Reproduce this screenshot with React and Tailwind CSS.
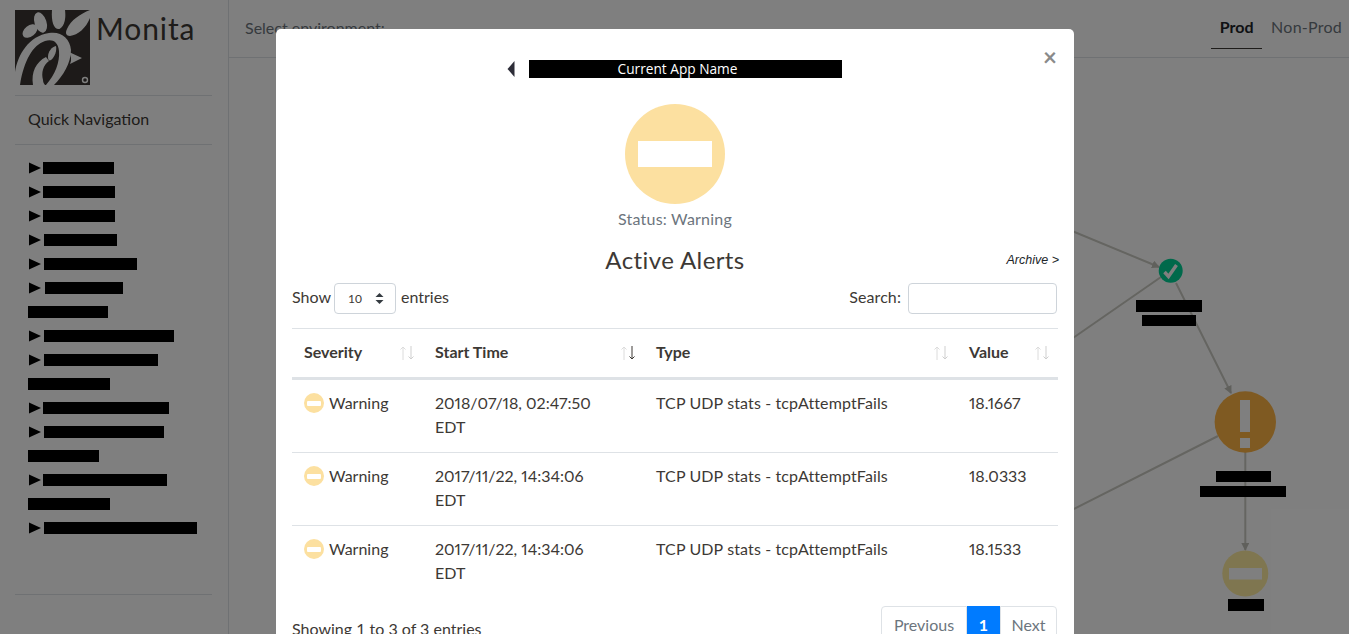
const navRows = [
  { w: 71, x: 14 }, { w: 72, x: 14 }, { w: 72, x: 14 }, { w: 73, x: 15 }, { w: 93, x: 15 },
  { w: 78, x: 16 }, { w: 80, plain: true }, { w: 130, x: 15 }, { w: 114, x: 15 }, { w: 82, plain: true },
  { w: 126, x: 14 }, { w: 120, x: 15 }, { w: 71, plain: true }, { w: 124, x: 14 }, { w: 82, plain: true },
  { w: 153, x: 15 },
];

const rows = [
  ["2018/07/18, 02:47:50", "18.1667"],
  ["2017/11/22, 14:34:06", "18.0333"],
  ["2017/11/22, 14:34:06", "18.1533"],
];

function Logo() {
  return (
    <svg width="75" height="75" viewBox="0 0 75 75" className="shrink-0">
      <rect width="75" height="75" fill="#3a3532" />
      <g fill="#ffffff">
        <ellipse cx="15" cy="21" rx="8.5" ry="5.5" transform="rotate(-38 15 21)" />
        <ellipse cx="25.5" cy="12.5" rx="6" ry="10.5" transform="rotate(-18 25.5 12.5)" />
        <path d="M37 0 L50 0 C51 7 50 16 44.5 19 C39 20 36 12 37 0 Z" />
        <path d="M75 0 L75 8 C71 18 63 25 55 26 C51 26 50 23 52 19 C56 10 65 4 75 0 Z" />
        <path d="M0 62 C3 44 14 26 34 23 C46 21 55 28 56 40 C56 53 48 66 39 75 L31 75 C40 65 45 52 44 41 C43 31 37 29 30 31 C18 35 9 50 5 75 L0 75 Z" />
        <path d="M18 75 C16 62 21 52 31 47 L34 51 C28 55 26 63 28 70 C28 72 29 74 30 75 Z" />
        <path d="M33 47 C33 41 37 37 41 36 C42 40 40 47 36 50 C34 51 33 50 33 47 Z" />
        <path d="M54 42 L67 48 L55 54 C57 50 56 46 54 42 Z" />
        <circle cx="70" cy="70" r="3.2" />
      </g>
      <circle cx="70" cy="70" r="1.8" fill="#3a3532" />
    </svg>
  );
}

function SortIcon({ active }) {
  return (
    <svg width="18" height="16" viewBox="0 0 18 16" className="shrink-0">
      <g fill="none" strokeWidth="1" stroke="#dcdcdc">
        <path d="M5 15V2M2.5 4.5 5 2l2.5 2.5" />
      </g>
      <g fill="none" strokeWidth="1" stroke={active ? "#3d3935" : "#cfcfcf"}>
        <path d="M13 1v13M10.5 11.5 13 14l2.5-2.5" />
      </g>
    </svg>
  );
}

function WarnIcon() {
  return (
    <span className="w-5 h-5 rounded-full bg-[#fce0a0] flex items-center justify-center shrink-0">
      <span className="w-[14px] h-[5px] rounded-[1px] bg-white" />
    </span>
  );
}

function Graph() {
  return (
    <svg width="1120" height="576" viewBox="229 58 1120 576" className="absolute inset-0">
      <defs>
        <marker id="ah" markerWidth="8" markerHeight="8" refX="7" refY="4" orient="auto" markerUnits="userSpaceOnUse">
          <path d="M0 0 L8 4 L0 8 Z" fill="#c0c0b8" />
        </marker>
      </defs>
      <g stroke="#cacac2" strokeWidth="2" fill="none">
        <path d="M1060 226 L1159 267" markerEnd="url(#ah)" />
        <path d="M1060 347 L1161 277" />
        <path d="M1176 283 L1231 393" markerEnd="url(#ah)" />
        <path d="M1218 436 L1060 516" />
        <path d="M1245.3 452 V550" markerEnd="url(#ah)" />
      </g>
      <circle cx="1170.7" cy="270.7" r="12" fill="#00d296" />
      <path d="M1164.5 272 L1168.5 276.5 L1176.5 265" stroke="#ffffff" strokeWidth="3.4" fill="none" />
      <circle cx="1245.3" cy="422" r="30.7" fill="#feb444" />
      <rect x="1240" y="400" width="10" height="32" fill="#ffffff" />
      <rect x="1240" y="438" width="10" height="10" fill="#ffffff" />
      <circle cx="1245.3" cy="573.5" r="23" fill="#feeca0" />
      <rect x="1229" y="568" width="33" height="11.5" fill="#ffffff" />
      <g fill="#000000">
        <rect x="1136" y="300" width="66" height="12" />
        <rect x="1142" y="315" width="54" height="11" />
        <rect x="1216" y="471" width="55" height="11" />
        <rect x="1200" y="486" width="86" height="11" />
        <rect x="1228" y="599" width="36" height="12" />
      </g>
    </svg>
  );
}

export default function App() {
  return (
    <div className="relative w-[1349px] h-[634px] overflow-hidden flex bg-white text-[#3d3935] text-base font-['Lato',sans-serif]">
      <aside className="w-[229px] h-full shrink-0 border-r border-[#dee2e6] pl-[15px] pr-[16px] flex flex-col">
        <div className="h-[96px] shrink-0 pt-[10px] flex gap-[7px] border-b border-[#dee2e6]">
          <Logo />
          <span className="text-[30px] leading-[36px] tracking-[0.9px] -ml-px">Monita</span>
        </div>
        <div className="h-[49px] shrink-0 pl-[13px] pb-[2px] flex items-center border-b border-[#dee2e6]">Quick Navigation</div>
        <ul className="pt-[11px] pl-[13px] h-[450px] shrink-0 border-b border-[#dee2e6]">
          {navRows.map((r, i) => (
            <li key={i} className="h-6 flex items-center">
              {!r.plain && (
                <svg width="15" height="12" viewBox="0 0 15 12" className="shrink-0">
                  <path d="M1 0.5 L13 6 L1 11.5 Z" fill="#000000" />
                </svg>
              )}
              <span
                className={`h-3 bg-black ${r.x === 16 ? "ml-[2px]" : r.x === 15 ? "ml-[1px]" : ""}`}
                style={{ width: r.w }}
              />
            </li>
          ))}
        </ul>
      </aside>

      <main className="flex-1 flex flex-col min-w-0">
        <header className="h-[58px] shrink-0 border-b border-[#dee2e6] pl-4 pr-[7px] flex items-start justify-between">
          <span className="mt-4 text-[#6c757d]">Select environment:</span>
          <nav className="flex">
            <span className="w-[51px] h-[49px] pt-[15px] text-center font-bold border-b border-[#3d3935] text-[#212529]">Prod</span>
            <span className="pl-[9px] pt-[15px] tracking-[0.25px] text-[#6c757d]">Non-Prod</span>
          </nav>
        </header>
        <div className="relative flex-1">
          <Graph />
        </div>
      </main>

      <div className="absolute inset-0 bg-black/50" />

      <section className="absolute left-[276px] top-[29px] w-[798px] h-[700px] bg-white rounded-[5px] px-4 pt-[31px]">
        <span className="absolute right-[17px] top-[13px] text-[24px] leading-[30px] font-bold text-[#8a8a8a]">×</span>
        <div className="flex items-center h-[18px] ml-[215px]">
          <svg width="8" height="16" viewBox="0 0 8 16" className="shrink-0">
            <path d="M7.5 0 V16 L0.5 8 Z" fill="#2d2d38" />
          </svg>
          <div className="ml-[14px] w-[313px] h-[18px] bg-black text-white text-center pr-[16px] text-[13.7px] leading-[18px] font-['Open_Sans',sans-serif]">
            Current App Name
          </div>
        </div>

        <div className="mt-[26px] mx-auto w-[100px] h-[100px] rounded-full bg-[#fce0a0] flex items-center justify-center">
          <span className="w-[74px] h-[26px] bg-white" />
        </div>
        <p className="mt-[3px] text-center text-[#6c757d] leading-6 tracking-[0.2px]">Status: Warning</p>

        <div className="mt-[11px] grid grid-cols-[1fr_auto_1fr] items-center h-[36px]">
          <span />
          <h2 className="text-2xl leading-9 tracking-[0.4px]">Active Alerts</h2>
          <a className="justify-self-end text-[12.5px] italic font-['Liberation_Sans',sans-serif] text-[#212529] -mr-px">Archive &gt;</a>
        </div>

        <div className="mt-[5px] flex justify-between items-center h-[31px]">
          <div className="flex items-center">
            <span className="-mt-[4px]">Show</span>
            <span className="ml-[3px] w-[62px] h-[31px] rounded-[4px] border border-[#ced4da] flex items-center justify-between pl-[13px] pr-[11px] text-xs">
              10
              <svg width="9" height="13" viewBox="0 0 9 13">
                <path d="M4.5 1 L8.5 5 H0.5 Z M4.5 12 L8.5 8 H0.5 Z" fill="#343a40" />
              </svg>
            </span>
            <span className="ml-[5px] -mt-[4px]">entries</span>
          </div>
          <div className="flex items-center">
            <span className="-mt-[4px] tracking-[0.1px]">Search:</span>
            <span className="ml-[7px] mr-px w-[149px] h-[31px] rounded-[4px] border border-[#ced4da]" />
          </div>
        </div>

        <table className="mt-[14px] w-[766px] table-fixed border-collapse">
          <colgroup>
            <col className="w-[131px]" />
            <col className="w-[221px]" />
            <col className="w-[313px]" />
            <col className="w-[101px]" />
          </colgroup>
          <thead>
            <tr className="border-t border-b-[3px] border-t-[#dee2e6] border-b-[#dee2e6]">
              {["Severity", "Start Time", "Type", "Value"].map((h, i) => (
                <th key={h} className="h-[50px] pl-3 pr-[7px] font-bold text-left">
                  <div className="flex items-center justify-between">
                    <span className="-mt-[3px]">{h}</span>
                    <SortIcon active={i === 1} />
                  </div>
                </th>
              ))}
            </tr>
          </thead>
          <tbody className="proportional-nums">
            {rows.map(([t, v], i) => (
              <tr key={i} className={i < 2 ? "border-b border-[#dee2e6]" : ""}>
                <td className="align-top pl-3 pt-[11px] pb-[13px] leading-6">
                  <span className="flex items-center gap-[5px]"><WarnIcon />Warning</span>
                </td>
                <td className="align-top pl-3 pr-8 pt-[11px] pb-[13px] leading-6">{t} EDT</td>
                <td className="align-top pl-3 pt-[11px] pb-[13px] leading-6 tracking-[0.13px]">TCP UDP stats - tcpAttemptFails</td>
                <td className="align-top pl-3 pt-[11px] pb-[13px] leading-6">{v}</td>
              </tr>
            ))}
          </tbody>
        </table>

        <div className="mt-[8px] flex justify-between items-start">
          <span className="mt-[11px]">Showing 1 to 3 of 3 entries</span>
          <div className="flex h-[38px] mr-px text-[#6c757d]">
            <span className="w-[86px] border border-[#dee2e6] rounded-l-[4px] flex items-center justify-center">Previous</span>
            <span className="w-[33px] bg-[#007bff] text-white font-bold flex items-center justify-center">1</span>
            <span className="w-[57px] border border-[#dee2e6] rounded-r-[4px] flex items-center justify-center">Next</span>
          </div>
        </div>
      </section>
    </div>
  );
}
